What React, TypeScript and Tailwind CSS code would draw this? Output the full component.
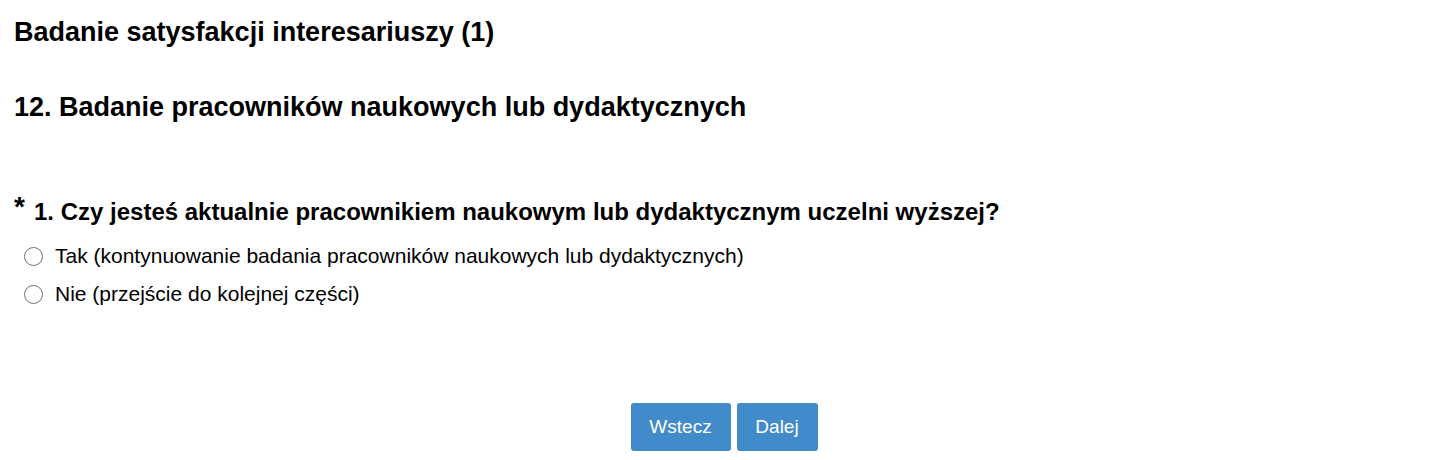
export default function App() {
  const options = [
    'Tak (kontynuowanie badania pracowników naukowych lub dydaktycznych)',
    'Nie (przejście do kolejnej części)',
  ];

  return (
    <div
      className="min-h-[460px] bg-white px-[14px] text-black"
      style={{ fontFamily: '"Liberation Sans", Arial, sans-serif' }}
    >
      <h1 className="pt-[16px] text-[27px] font-bold leading-[32px]">
        Badanie satysfakcji interesariuszy (1)
      </h1>
      <h2 className="mt-[43px] text-[27px] font-bold leading-[32px]">
        12. Badanie pracowników naukowych lub dydaktycznych
      </h2>

      <div className="mt-[70px] flex items-start">
        <span className="w-[20px] text-[28px] font-bold leading-[28px]">*</span>
        <h3 className="mt-[5px] text-[24px] font-bold leading-[28px]">
          1. Czy jesteś aktualnie pracownikiem naukowym lub dydaktycznym uczelni wyższej?
        </h3>
      </div>

      <div className="mt-[18px] flex flex-col gap-[14px] pl-[10px]">
        {options.map((o) => (
          <label key={o} className="flex items-center gap-[12px] text-[21px] leading-[24px]">
            <span className="h-[19px] w-[19px] shrink-0 rounded-full border-[1.5px] border-[#6f6f6f] bg-white" />
            {o}
          </label>
        ))}
      </div>

      <div className="mt-[97px] flex justify-center gap-[6px]">
        <button className="h-[48px] w-[100px] rounded-[3px] bg-[#428bca] text-[19px] text-white">
          Wstecz
        </button>
        <button className="h-[48px] w-[81px] rounded-[3px] bg-[#428bca] text-[19px] text-white">
          Dalej
        </button>
      </div>
    </div>
  );
}
